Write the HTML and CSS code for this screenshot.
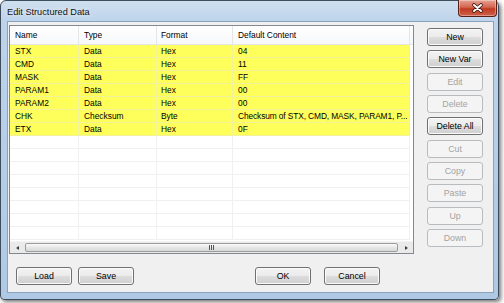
FILE: index.html
```html
<!DOCTYPE html>
<html lang="en">
  <head>
    <meta charset="UTF-8" />
    <title>Edit Structured Data</title>
    <link rel="stylesheet" href="styles.css">
  </head>
  <body>
    <div class="window">
      <div class="titlebar">
        <span class="title">Edit Structured Data</span>
        <div class="close">
          <svg width="39" height="17" viewBox="0 0 39 17">
            <path d="M16 5 L23 11 M23 5 L16 11" stroke="#3a1410" stroke-width="3.6" stroke-linecap="round" />
            <path d="M16 5 L23 11 M23 5 L16 11" stroke="#ffffff" stroke-width="2" stroke-linecap="round" />
          </svg>
        </div>
      </div>

      <div class="client">
        <div class="main">
          <div class="list">
            <div class="list-header">
              <div class="hcell c1">Name</div>
              <div class="hcell c2">Type</div>
              <div class="hcell c3">Format</div>
              <div class="hcell c4">Default Content</div>
              <div class="hfill"></div>
            </div>

            <div class="list-body">
              <div class="row filled">
                <div class="cell">STX</div><div class="cell">Data</div><div class="cell">Hex</div><div class="cell">04</div>
              </div>
              <div class="row filled">
                <div class="cell">CMD</div><div class="cell">Data</div><div class="cell">Hex</div><div class="cell">11</div>
              </div>
              <div class="row filled">
                <div class="cell">MASK</div><div class="cell">Data</div><div class="cell">Hex</div><div class="cell">FF</div>
              </div>
              <div class="row filled">
                <div class="cell">PARAM1</div><div class="cell">Data</div><div class="cell">Hex</div><div class="cell">00</div>
              </div>
              <div class="row filled">
                <div class="cell">PARAM2</div><div class="cell">Data</div><div class="cell">Hex</div><div class="cell">00</div>
              </div>
              <div class="row filled">
                <div class="cell">CHK</div><div class="cell">Checksum</div><div class="cell">Byte</div><div class="cell long">Checksum of STX, CMD, MASK, PARAM1, P...</div>
              </div>
              <div class="row filled">
                <div class="cell">ETX</div><div class="cell">Data</div><div class="cell">Hex</div><div class="cell">0F</div>
              </div>

              <!-- empty grid rows -->
              <div class="row"><div class="cell"></div><div class="cell"></div><div class="cell"></div><div class="cell"></div></div>
              <div class="row"><div class="cell"></div><div class="cell"></div><div class="cell"></div><div class="cell"></div></div>
              <div class="row"><div class="cell"></div><div class="cell"></div><div class="cell"></div><div class="cell"></div></div>
              <div class="row"><div class="cell"></div><div class="cell"></div><div class="cell"></div><div class="cell"></div></div>
              <div class="row"><div class="cell"></div><div class="cell"></div><div class="cell"></div><div class="cell"></div></div>
              <div class="row"><div class="cell"></div><div class="cell"></div><div class="cell"></div><div class="cell"></div></div>
              <div class="row"><div class="cell"></div><div class="cell"></div><div class="cell"></div><div class="cell"></div></div>
              <div class="row"><div class="cell"></div><div class="cell"></div><div class="cell"></div><div class="cell"></div></div>
            </div>

            <div class="hscroll">
              <div class="arrow"><span class="tri-left"></span></div>
              <div class="thumb">
                <svg width="7" height="5" viewBox="0 0 7 5">
                  <path d="M1.5 0 V5 M3.5 0 V5 M5.5 0 V5" stroke="#555" stroke-width="1" />
                </svg>
              </div>
              <div class="arrow"><span class="tri-right"></span></div>
            </div>
          </div>

          <div class="side">
            <button class="btn">New</button>
            <button class="btn">New Var</button>
            <button class="btn" disabled>Edit</button>
            <button class="btn" disabled>Delete</button>
            <button class="btn">Delete All</button>
            <button class="btn" disabled>Cut</button>
            <button class="btn" disabled>Copy</button>
            <button class="btn" disabled>Paste</button>
            <button class="btn" disabled>Up</button>
            <button class="btn" disabled>Down</button>
          </div>
        </div>

        <div class="footer">
          <button class="btn">Load</button>
          <button class="btn save">Save</button>
          <button class="btn ok">OK</button>
          <button class="btn cancel">Cancel</button>
        </div>
      </div>
    </div>
  </body>
</html>
```

FILE: styles.css
```css
body {
  margin: 0;
  width: 504px;
  height: 303px;
  overflow: hidden;
  background-color: #ffffff;
  font-family: "Liberation Sans", Arial, sans-serif;
}

.window {
  box-sizing: border-box;
  width: 499px;
  height: 300px;
  border: 1px solid #3e4d5e;
  border-radius: 6px 6px 4px 4px;
  padding: 0 4px 6px 6px;
  display: flex;
  flex-direction: column;
  background: linear-gradient(to bottom, #cfdff0 0px, #bcd3ea 22px, #afc9e5 100%);
  box-shadow: 2px 2px 4px rgba(0, 0, 0, 0.55);
}

.titlebar {
  height: 20px;
  display: flex;
  align-items: flex-start;
  justify-content: space-between;
}

.title {
  padding-top: 6px;
  font-size: 9.2px;
  color: #111;
  text-shadow: 0 0 4px #ffffff;
}

.close {
  width: 39px;
  height: 17px;
  margin-top: -1px;
  margin-right: -3px;
  box-sizing: border-box;
  border: 1px solid #5a2018;
  border-top: none;
  border-radius: 0 0 4px 4px;
  background: linear-gradient(to bottom, #e6a395 0%, #d4654f 45%, #bf3a22 55%, #d0604a 100%);
  box-shadow: inset 0 0 0 1px rgba(255, 255, 255, 0.35);
}

.close svg {
  display: block;
  margin-left: -1px;
}

.client {
  flex: 1;
  border: 1px solid #8aa2bb;
  background-color: #f0f0f0;
  display: flex;
  flex-direction: column;
}

.main {
  display: flex;
  align-items: flex-start;
  gap: 13px;
  padding: 3px 0 0 1px;
}

.list {
  width: 405px;
  height: 229px;
  box-sizing: border-box;
  border: 1px solid #828790;
  background-color: #ffffff;
  display: flex;
  flex-direction: column;
  font-size: 8.4px;
  color: #000;
}

.list-header {
  height: 19px;
  display: flex;
  border-bottom: 1px solid #e5e5e5;
  box-sizing: border-box;
  background: linear-gradient(to bottom, #ffffff, #f7f8fa);
}

.hcell {
  box-sizing: border-box;
  padding-left: 5px;
  line-height: 18px;
  border-right: 1px solid #e3e5e8;
  white-space: nowrap;
}

.c1 { width: 69px; }
.c2 { width: 78px; }
.c3 { width: 76px; padding-left: 4px; }
.c4 { width: 177px; }

.hfill {
  flex: 1;
}

.list-body {
  flex: 1;
  overflow: hidden;
}

.row {
  display: grid;
  grid-template-columns: 69px 78px 76px 177px;
  width: 400px;
  height: 13px;
}

.cell {
  box-sizing: border-box;
  height: 13px;
  padding-left: 5px;
  line-height: 12px;
  border-right: 1px solid #f0f0f0;
  border-bottom: 1px solid #f0f0f0;
  white-space: nowrap;
  overflow: hidden;
}

.cell.long {
  letter-spacing: -0.12px;
}

.row .cell:nth-child(3) {
  padding-left: 4px;
}

.row.filled .cell {
  background-color: #ffff5c;
  border-color: #f2f29a;
}

.hscroll {
  height: 11px;
  display: flex;
  align-items: stretch;
  background-color: #eaeaea;
  border-top: 1px solid #f4f4f4;
}

.arrow {
  width: 14px;
  display: flex;
  align-items: center;
  justify-content: center;
}

.tri-left {
  width: 0;
  height: 0;
  border-top: 2.5px solid transparent;
  border-bottom: 2.5px solid transparent;
  border-right: 3px solid #404040;
}

.tri-right {
  width: 0;
  height: 0;
  border-top: 2.5px solid transparent;
  border-bottom: 2.5px solid transparent;
  border-left: 3px solid #404040;
}

.thumb {
  flex: 1;
  margin: 1px 1px;
  border: 1px solid #9b9b9b;
  border-radius: 2px;
  background: linear-gradient(to bottom, #fbfbfb, #e6e6e6 50%, #d8d8d8);
  display: flex;
  align-items: center;
  justify-content: center;
}

.thumb svg {
  display: block;
}

.side {
  display: flex;
  flex-direction: column;
  gap: 4.33px;
  padding-top: 3px;
}

.btn {
  box-sizing: border-box;
  width: 56px;
  height: 18px;
  margin: 0;
  padding: 0;
  border: 1px solid #707070;
  border-radius: 3px;
  background: linear-gradient(to bottom, #f3f3f3 0%, #ebebeb 50%, #dddddd 50%, #cfcfcf 100%);
  box-shadow: inset 0 0 0 1px #fbfbfb;
  font-family: "Liberation Sans", Arial, sans-serif;
  font-size: 8.8px;
  color: #000;
}

.btn:disabled {
  border-color: #b8bcbf;
  background: #f4f4f4;
  box-shadow: none;
  color: #a3a3a3;
}

.footer {
  display: flex;
  margin-top: 13px;
  padding-left: 8px;
}

.save {
  margin-left: 6px;
}

.ok {
  margin-left: 121px;
}

.cancel {
  margin-left: 13px;
}
```
